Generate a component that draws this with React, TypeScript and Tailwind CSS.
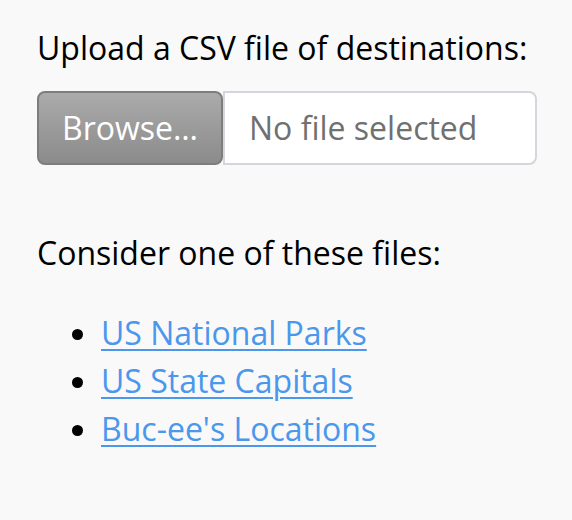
export default function App() {
  const files = ["US National Parks", "US State Capitals", "Buc-ee's Locations"];
  return (
    <div className="min-h-[520px] bg-[#f9f9f9] font-['Open_Sans',sans-serif] text-[32px] text-black">
      <div className="px-[37px] pt-[28px]">
        <p className="leading-[40px]">Upload a CSV file of destinations:</p>

        <div className="mt-[23px] flex h-[74px] w-[500px]">
          <button className="w-[186px] rounded-[8px] border-2 border-[#7d7d7d] bg-gradient-to-b from-[#ababab] to-[#8b8b8b] text-white">
            Browse…
          </button>
          <div className="flex flex-1 items-center rounded-r-[8px] border-2 border-[#d3d6db] bg-white pl-[24px] text-[#707070]">
            No file selected
          </div>
        </div>

        <p className="mt-[68px] leading-[40px]">Consider one of these files:</p>

        <ul className="mt-[36px] list-disc pl-[64px] leading-[48px]">
          {files.map((f) => (
            <li key={f}>
              <a href="#" className="text-[#4a97ec] underline decoration-2 underline-offset-[4px]">
                {f}
              </a>
            </li>
          ))}
        </ul>
      </div>
    </div>
  );
}
